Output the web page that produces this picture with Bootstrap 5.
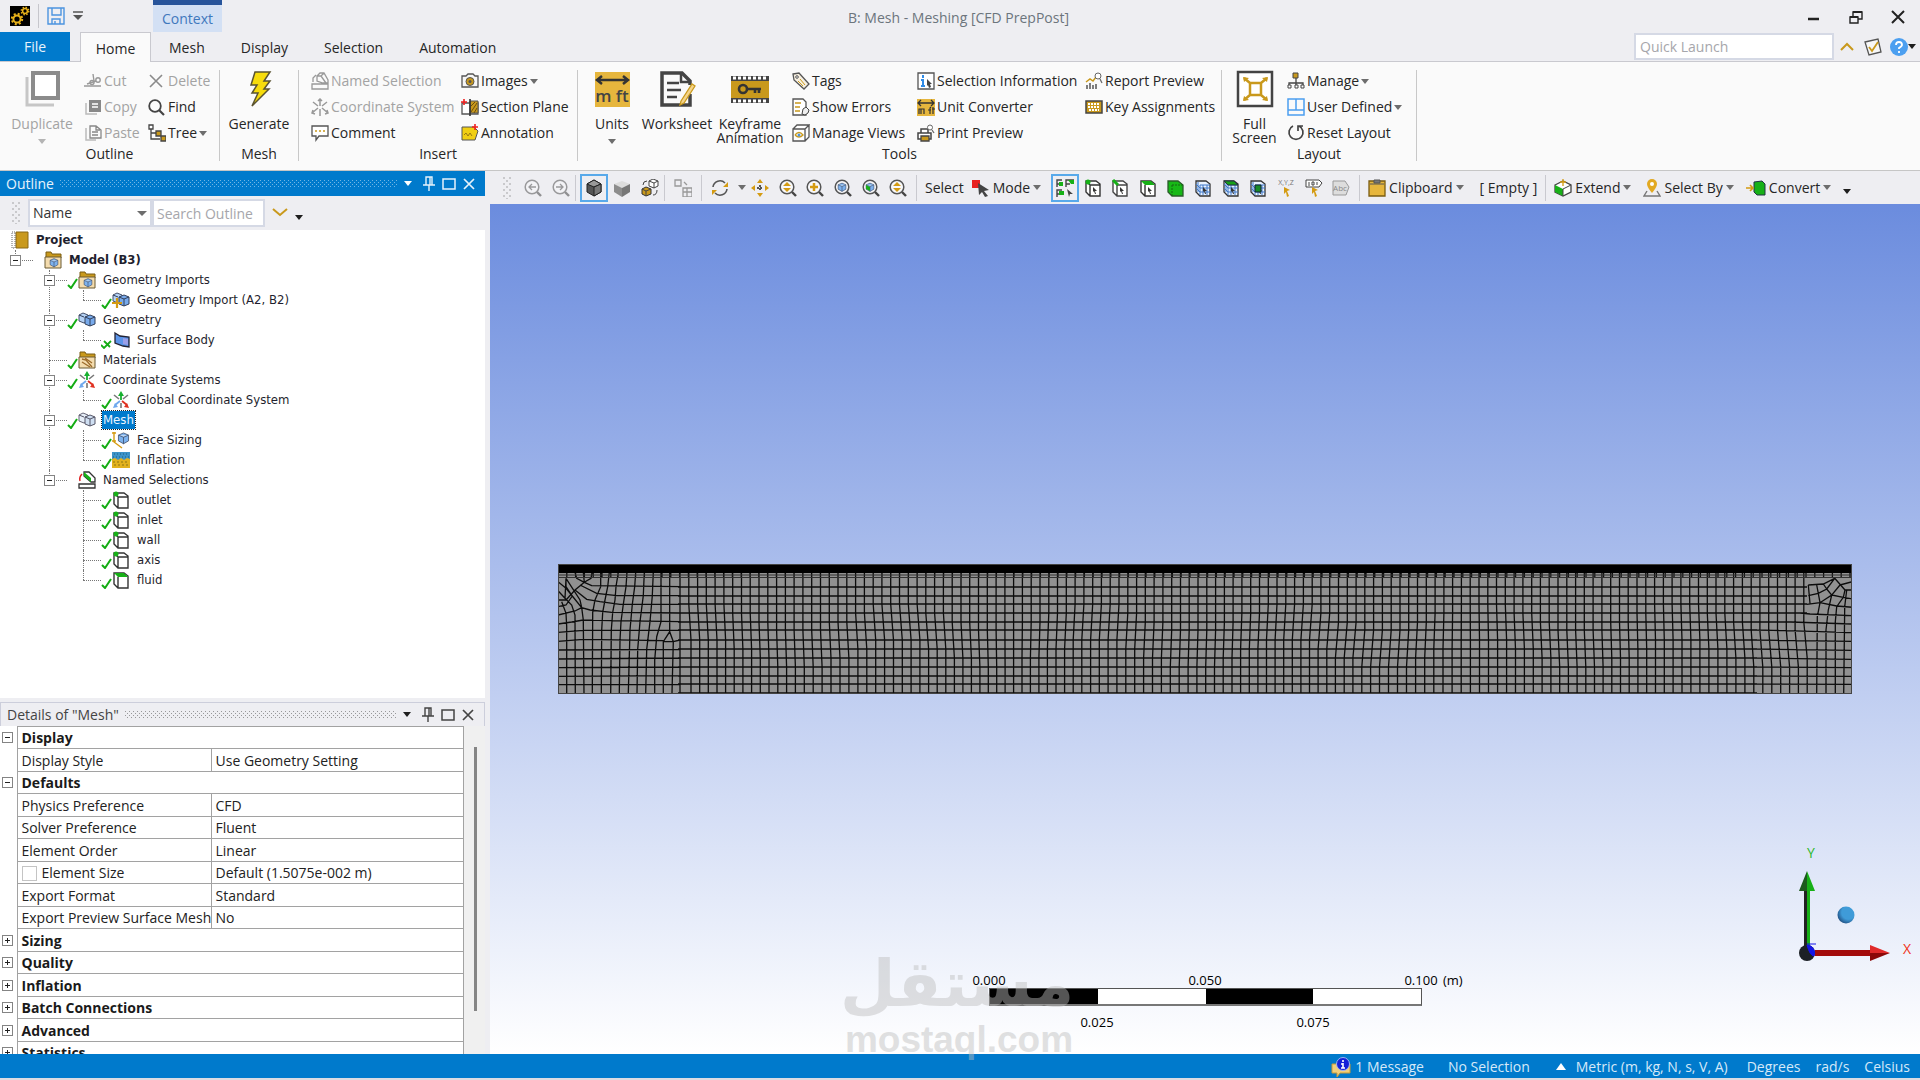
<!DOCTYPE html>
<html lang="en">
<head>
<meta charset="utf-8">
<meta name="viewport" content="width=device-width, initial-scale=1">
<title>B: Mesh - Meshing [CFD PrepPost]</title>
<link href="https://cdn.jsdelivr.net/npm/bootstrap@5.3.0/dist/css/bootstrap.min.css" rel="stylesheet">
<style>
:root{--chrome:#eeeef2;--blue:#007acc;--ink:#262626;--gold:#c9991c;--line:#cccedb}
body{background:var(--chrome);color:var(--ink);font:14px/20px "Open Sans","Noto Sans",sans-serif;overflow:hidden}
button{font:inherit;color:inherit;background:none;border:0;padding:0;white-space:nowrap}
button:disabled{color:#a3a3a3}
svg{flex:none;display:block}
.i18{width:18px;height:18px}
.caret{width:0;height:0;border:4px solid transparent;border-top:5px solid #6d6d6d;border-bottom:0;flex:none}
.caret-dark{border-top-color:#1e1e1e}
.caret-lite{border-top-color:#fff}
.titlebar{height:32px}
.titlebar .side{flex:1 1 0}
.app-title{padding-top:4px}
.logo-gap{padding-left:10px}
.vr-line{width:1px;background:#c6c6cc}
.context-tab{width:69px;height:32px;margin-left:70px;background:#d3e0f4;border-top:5px solid #27549b;color:#3f78bd;line-height:28px}
.winctl{gap:24px;padding-right:13px}
.tabrow{height:30px;border-bottom:1px solid #c9c9cf}
.tabrow a{height:29px;line-height:32px;padding:0 18px;color:var(--ink);text-decoration:none}
.tabrow .file-tab{background:var(--blue);color:#e8f3fb;width:70px;padding:0;text-align:center;line-height:30px}
.tabrow .home-tab{height:30px;margin-left:10px;width:71px;padding:0;text-align:center;background:#fafafa;border:1px solid #c9c9cf;border-bottom:0}
.launch{width:200px;height:27px;border:2px solid #d5d9e5;padding:0 4px;background:#fff}
input::placeholder{color:#a6a6ab;opacity:1}
.ribbon{background:#fafafa;height:109px;padding-top:8px;border-bottom:1px solid #c6c6c6}
.rgroup{height:91px;border-right:1px solid #c8c8c8}
.rgrid{display:grid;height:76px}
.g-outline{grid-template-columns:84px 64px 71px}
.g-mesh{grid-template-columns:78px}
.g-insert{grid-template-columns:150px 116px;padding-left:12px}
.g-tools{grid-template-columns:68px 62px 84px 125px 168px 136px}
.g-layout{grid-template-columns:65px 129px}
.rcol{display:flex;flex-direction:column;gap:4px;align-items:flex-start}
.rcol button{display:flex;align-items:center;height:22px;gap:2px}
.big{display:flex;flex-direction:column;align-items:center;line-height:14px;height:76px;text-align:center}
.big svg{width:38px;height:38px;margin-bottom:9px}
.big .caret{margin-top:8px}
.glabel{text-align:center;line-height:16px}
.side-panel{width:485px;margin-right:5px;min-height:0}
.workarea{min-height:0}
.panel-head{height:25px;padding:0 9px 0 6px;gap:6px}
.panel-head.on{background:var(--blue);color:#e6f2fb}
.panel-head.off{border:1px solid var(--line);border-bottom:0;color:#444}
.dots{height:8px;background-image:conic-gradient(at 1px 1px,transparent 75%,currentColor 0),conic-gradient(at 1px 1px,transparent 75%,currentColor 0);background-size:4px 4px;background-position:0 0,2px 2px;opacity:.5}
.grip{width:8px;height:22px;color:#777;background-image:conic-gradient(at 2px 2px,transparent 75%,currentColor 0),conic-gradient(at 2px 2px,transparent 75%,currentColor 0);background-size:6px 6px;background-position:0 0,3px 3px;opacity:.3}
.filter{height:34px;padding-left:12px}
.filter select,.filter input{height:28px;border:2px solid #d5d9e5;background:#fff;color:#333;padding:0 3px;border-radius:0}
.filter select{appearance:none;width:100%}
.filter .namebox{width:124px;margin-left:8px}
.filter .namebox .caret{position:absolute;right:5px;top:12px;pointer-events:none;border-width:5px 5px 0}
.filter input{width:113px}
.tree{font:13px/20px "DejaVu Sans Condensed","Noto Sans",sans-serif;font-stretch:condensed;color:#1f1f2e;background:#fff}
.tree ul{list-style:none;margin:0 0 0 34px;padding:0}
.tree>ul{margin-left:15px}
.tree li{position:relative}
.tree li::before{content:"";position:absolute;left:0;top:0;bottom:0;border-left:1px dotted #777}
.tree li:last-child::before{bottom:auto;height:10px}
.tree li::after{content:"";position:absolute;left:0;top:10px;width:18px;border-top:1px dotted #777}
.trow{display:flex;align-items:center;height:20px;padding-left:29px;gap:7px;white-space:nowrap}
.proj{padding-left:11px}
.tg{position:absolute;left:-5px;top:5px;z-index:1;width:11px;height:11px;border:1px solid #848484;background:#fff}
.tg::before,.plus::after{content:"";position:absolute;background:#222}
.tg::before{left:2px;top:4px;width:5px;height:1px}
.plus::after{left:4px;top:2px;width:1px;height:5px}
.tick{position:absolute;left:18px;top:8px;width:11px;height:11px;z-index:1}
.picked{background:var(--blue);color:#eaf5ff;outline:1px dotted #222;margin:0 -1px;padding:0 1px;line-height:18px}
.details{height:352px}
.dtable{width:464px;table-layout:fixed;border-collapse:collapse;background:#fff;color:#222;line-height:20px}
.dtable tr{height:22px}
.dtable tr:nth-child(even){height:23px}
.dtable td,.dtable th{padding:1px 0 0 4px;border:1px solid #a2a2a2;font-weight:400;white-space:nowrap;overflow:hidden}
.dtable th.cat{font-weight:700;color:#1a1a1a}
.dtable .gut{width:17px}
.dtable td.gut{border-width:0 1px 0 0;padding:0 0 0 2px}
.dtable .tg{position:relative;left:0;top:0;display:block}
.dtable .nm{width:194px}
.dtable input{appearance:none;width:15px;height:15px;border:1px solid #c4c4c4;margin:0 5px 0 0;vertical-align:-3px;background:#fff}
.rail{width:21px;background:#f0f0f0;padding:21px 0 0 10px}
.rail div{width:3px;height:264px;background:#858585}
.toolbar{height:33px;padding-left:13px}
.tset{display:flex;align-items:center;justify-content:space-between;height:28px}
.tset button{display:flex;align-items:center;justify-content:center;width:28px;height:28px;flex-shrink:1;min-width:0}
.t6{width:166px}
.t11{width:304px;margin-left:10px}
.tset .hot{border:2px solid #58a9ea}
.tsep{width:1px;height:26px;background:#c9c9cf}
.t-word{display:flex;align-items:center;gap:3px;height:28px}
.t-gap{margin-left:12px}
.view{background:linear-gradient(#6b8cde,#fff);padding:0 68px}
.view .mesh{width:100%;height:130px}
.triad{position:absolute;right:0;bottom:84px}
.scale{position:absolute;left:499px;bottom:24px;width:433px;font-size:13px;line-height:16px;color:#000}
.scale .bar{height:18px;border:1px solid #555;border-bottom:2px solid #777;background:#fff}
.scale .bar div{width:25%}
.scale .ticks{height:16px;margin:0 -54px}
.scale .ticks span{flex:0 0 108px;text-align:center;white-space:nowrap}
.unit{position:absolute;left:100%;margin-left:21px;top:0}
.wm{position:absolute;left:354px;bottom:-7px;width:230px;text-align:center;color:#bdbdbd;opacity:.45;font-family:"Liberation Sans",sans-serif;font-weight:700;pointer-events:none}
.wm .ar{font:700 64px/70px "DejaVu Sans",sans-serif}
.wm .en{font-size:37px;line-height:42px}
.status{height:26px;background:var(--blue);border-bottom:2px solid #dcdce2;color:#d6e9f8;padding:2px 10px 0 0}
.status .seg{margin-left:15px}
.status .metric{margin:0 4px 0 10px}
.status .up{margin-left:26px}
</style>
</head>
<body class="vh-100 d-flex flex-column">
<svg width="0" height="0" class="position-absolute" aria-hidden="true"><defs>
<symbol id="app" viewBox="0 0 20 20"><rect width="20" height="20" fill="#000"/><g fill="none" stroke="#e8b21a"><circle cx="7" cy="13" r="3.6" stroke-width="2"/><circle cx="7" cy="13" r="5.2" stroke-width="2" stroke-dasharray="2 2.1"/><circle cx="15" cy="5" r="2.4" stroke-width="1.5"/><circle cx="15" cy="5" r="3.8" stroke-width="1.4" stroke-dasharray="1.5 1.5"/></g></symbol>
<symbol id="save" viewBox="0 0 18 18"><path d="M1 1h16v16H1zM5 1v7h9V1M5 17v-5h8v5M8 14v3" fill="none" stroke="#4c94e0" stroke-width="1.4"/></symbol>
<symbol id="dup" viewBox="0 0 38 38"><rect x="10" y="3" width="25" height="25" fill="#fff" stroke="#8b8b8b" stroke-width="4"/><path d="M4 7v28h27" fill="none" stroke="#c6c6c6" stroke-width="3"/></symbol>
<symbol id="cut" viewBox="0 0 18 18"><g fill="none" stroke="#999" stroke-width="1.4"><circle cx="14" cy="8" r="2.2"/><circle cx="8" cy="10.500" r="2"/><path d="M12 9 3 12M10 9 9 2M0 14h17"/></g></symbol>
<symbol id="copy" viewBox="0 0 18 18"><path d="M5 2h12v12H5z" fill="#888"/><path d="M8 6h6M8 9h6" stroke="#fff" stroke-width="1.500"/><path d="M2 5v11h11" fill="none" stroke="#bbb" stroke-width="1.500"/></symbol>
<symbol id="paste" viewBox="0 0 18 18"><path d="M6 2h6l5 4v8H6zM12 2v4h4M8 8h6M8 11h6" fill="none" stroke="#888" stroke-width="1.300"/><path d="M2 4v12h10" fill="none" stroke="#bbb" stroke-width="1.500"/></symbol>
<symbol id="del" viewBox="0 0 18 18"><path d="m2 3 12 12M14 3 2 15" stroke="#8a8a8a" stroke-width="1.600"/></symbol>
<symbol id="find" viewBox="0 0 18 18"><circle cx="7" cy="8" r="5.800" fill="none" stroke="#444" stroke-width="1.800"/><path d="m11 12 5 5" stroke="#444" stroke-width="2.200"/></symbol>
<symbol id="treei" viewBox="0 0 18 18"><path d="M3 5v10h9M3 9h6" fill="none" stroke="#444" stroke-width="1.300"/><path d="M1 1h4v4H1z" fill="#fff" stroke="#444" stroke-width="1.300"/><path d="M8 7h5v5H8zM13 12h5v5h-5z" fill="#c9991c" stroke="#444" stroke-width="1.300"/></symbol>
<symbol id="bolt" viewBox="0 0 38 38"><path d="M15 2h15l-6 9h6l-6 8h5L12 36l6-13h-6l5-8h-6z" fill="#f7dc0b" stroke="#5a5330" stroke-width="1.500"/></symbol>
<symbol id="nsel" viewBox="0 0 18 18"><g fill="none" stroke="#999" stroke-width="1.300"><path d="M1 12h16v5H1zM6 9 6 4l3-3h4l4 7v3h-5zM6 4h4l5 7M10 4l3-3M2 10V6l3-3"/></g></symbol>
<symbol id="csysg" viewBox="0 0 18 18"><path d="M9 8V1M9 11v7M7 8 2 4M11 8l5-4M7 10l-6 5M11 10l6 5M7 3l2-2 2 2M2 12l-1 3 3 1M16 12l1 3-3 1" fill="none" stroke="#999" stroke-width="1.500"/></symbol>
<symbol id="cmt" viewBox="0 0 18 18"><path d="M1 2h16v10H8l-3 4v-4H1z" fill="#fff" stroke="#555" stroke-width="1.300"/><path d="M4 7h10" stroke="#c9991c" stroke-width="1.500" stroke-dasharray="2 2"/></symbol>
<symbol id="cam" viewBox="0 0 18 18"><path d="M1 4h4l2-2h5l2 2h3v11H1z" fill="#f6f6f6" stroke="#555" stroke-width="1.300"/><circle cx="9" cy="9.500" r="4" fill="#c9991c" stroke="#555"/><circle cx="9" cy="9.500" r="1.500" fill="#555"/></symbol>
<symbol id="sect" viewBox="0 0 18 18"><path d="M1 5h16v11H1z" fill="#fff" stroke="#555" stroke-width="1.300"/><path d="M9 3h8v12H9z" fill="#c9991c" stroke="#555"/><path d="m10 14 6-9M13 15l3-5M10 8l4-4" stroke="#6b4e0c"/><path d="M9 1v17" stroke="#333" stroke-width="1.600"/><path d="M3 1v6M0 4h6" stroke="#f02020" stroke-width="1.600"/></symbol>
<symbol id="anno" viewBox="0 0 18 18"><path d="M1 3h12l4 4-3 9H1z" fill="#f1cf12" stroke="#555"/><path d="m3 11 2-2 2 3 2-3 2 3" fill="none" stroke="#9a7a10"/><path d="M14 0v6M11 3h6" stroke="#f02020" stroke-width="1.600"/></symbol>
<symbol id="units" viewBox="0 0 38 38"><rect x="2" y="2" width="35" height="35" fill="#e6b63d"/><path d="M5 10h29M9 6l-5 4 5 4M30 6l5 4-5 4" stroke="#333" stroke-width="2.500" fill="none"/><text x="19" y="32" text-anchor="middle" font-family="Open Sans" font-size="17" font-weight="600" fill="#444">m ft</text></symbol>
<symbol id="wsheet" viewBox="0 0 38 38"><path d="M32 24v11H4V3h20l8 8v4" fill="none" stroke="#444" stroke-width="3.500"/><path d="M23 3v9h9M9 13h12M9 20h14M9 27h10" fill="none" stroke="#444" stroke-width="2.500"/><path d="m23 31 11-17 3 2-11 17-4 2z" fill="#f5d48a" stroke="#c9991c" stroke-width="1.300"/></symbol>
<symbol id="keyf" viewBox="0 0 38 38"><path d="M0 6h38v27H0z" fill="#444"/><path d="M0 11h38v17H0z" fill="#c9991c"/><path d="M2 8h35M2 31h35" stroke="#fff" stroke-width="3" stroke-dasharray="3 2"/><circle cx="12" cy="19" r="4" fill="none" stroke="#333" stroke-width="2.600"/><path d="M16 19h14M24 19v4M28 19v4" stroke="#333" stroke-width="2.600"/></symbol>
<symbol id="tag" viewBox="0 0 18 18"><path d="m1 2 6-1 10 11-5 5L2 8z" fill="#f6efe0" stroke="#555" stroke-width="1.300"/><circle cx="5" cy="5" r="1.300" fill="#fff" stroke="#555"/><path d="m8 7 5 6M6 9l5 5" stroke="#c9991c"/></symbol>
<symbol id="errs" viewBox="0 0 18 18"><path d="M1 1h10l3 3v13H1z" fill="#fff" stroke="#555" stroke-width="1.300"/><path d="M3 5h6M3 9h5M3 13h5" stroke="#c9991c" stroke-width="1.500"/><path d="m10 16 1-5 3-2 3 3-1 3-3 2z" fill="#eee" stroke="#444"/></symbol>
<symbol id="mview" viewBox="0 0 18 18"><path d="M1 5h12v12H1zM1 5l4-4h12l-4 4M17 1v12l-4 4" fill="#fff" stroke="#555" stroke-width="1.300"/><path d="M3 11q4-5 8 0-4 4-8 0" fill="#fff" stroke="#c9991c" stroke-width="1.300"/><circle cx="7" cy="11" r="1.500" fill="#4c94e0"/></symbol>
<symbol id="sinfo" viewBox="0 0 18 18"><path d="M1 1h16v16H1z" fill="#fff" stroke="#555" stroke-width="1.300"/><path d="M6 3v3M6 7v8M4 8h2M4 14h4" stroke="#2f8be6" stroke-width="2"/><path d="m10 7 5 5h-2l1 3-2 1-1-3-1 1z" fill="#444"/></symbol>
<symbol id="uconv" viewBox="0 0 18 18"><rect y="1" width="18" height="17" fill="#e6b63d"/><path d="M1 5h16M4 2 1 5l3 3M14 2l3 3-3 3" stroke="#333" stroke-width="1.300" fill="none"/><path d="M2 16v-5h2v5m0-5h3v5M13 16v-6l1-1M11 12h3M16 9v7M15 11h3" stroke="#333" stroke-width="1.200" fill="none"/></symbol>
<symbol id="print" viewBox="0 0 18 18"><path d="M4 9V5h7v4M1 9h13v6H1z" fill="#fff" stroke="#444" stroke-width="1.500"/><path d="M4 12h8v5H4z" fill="#c9991c" stroke="#444" stroke-width="1.300"/><circle cx="13" cy="3.500" r="2.500" fill="#fff" stroke="#666"/><path d="m15 6 2 3" stroke="#666" stroke-width="1.300"/></symbol>
<symbol id="report" viewBox="0 0 18 18"><path d="M2 13v4M5 11v6M8 13v4M11 12v5" stroke="#555" stroke-width="1.500"/><path d="m1 10 4-3 3 2 3-4" fill="none" stroke="#c9991c" stroke-width="1.500"/><circle cx="13" cy="4" r="3" fill="#fff" stroke="#666"/><path d="m15 7 2 4" stroke="#666" stroke-width="1.300"/></symbol>
<symbol id="keyb" viewBox="0 0 18 18"><path d="M1 3h16v12H1z" fill="#c9991c" stroke="#444" stroke-width="1.500"/><path d="M3 6h12M3 9h12M4 12h10" stroke="#fff" stroke-width="1.800" stroke-dasharray="2 1"/></symbol>
<symbol id="full" viewBox="0 0 38 38"><path d="M2 2h34v34H2z" fill="#fff" stroke="#444" stroke-width="2.500"/><path d="M14 13h11v12H14zM14 13 8 8M25 13l6-5M14 25l-6 5M25 25l6 5" fill="none" stroke="#c9991c" stroke-width="2.500"/><path d="m7 7 6 1-5 4zM32 7l-6 1 5 4zM7 31l6-1-5-4zM32 31l-6-1 5-4z" fill="#c9991c"/></symbol>
<symbol id="manage" viewBox="0 0 18 18"><path d="M9 6v5M2 14v-3h14v3M9 11v3" fill="none" stroke="#444" stroke-width="1.300"/><path d="M6 1h5v5H6z" fill="#c9991c" stroke="#444"/><path d="M1 13h3v3H1zM8 13h3v3H8zM14 13h3v3h-3z" fill="#fff" stroke="#444"/></symbol>
<symbol id="udef" viewBox="0 0 18 18"><path d="M1 1h16v16H1zM1 12h16M9 1v11" fill="none" stroke="#4c9ff0" stroke-width="1.500"/></symbol>
<symbol id="reset" viewBox="0 0 18 18"><path d="M6 2a7 7 0 1 0 6 0M11 7V2h5" fill="none" stroke="#444" stroke-width="1.700"/></symbol>
<symbol id="min" viewBox="0 0 18 18"><path d="M3 12h11" stroke="#222" stroke-width="2.500"/></symbol>
<symbol id="rest" viewBox="0 0 18 18"><path d="M3 10h8v6H3zM6 10V5h9v7h-4" fill="none" stroke="#222" stroke-width="1.400"/><path d="M3 10h8M6 5h9" stroke="#222" stroke-width="2"/></symbol>
<symbol id="cls" viewBox="0 0 18 18"><path d="m3 4 12 12M15 4 3 16" stroke="#222" stroke-width="2"/></symbol>
<symbol id="chk" viewBox="0 0 18 18"><path d="m1 4 13-3 3 13-12 3z" fill="#f7f7f7" stroke="#555" stroke-width="1.300"/><path d="m5 9 3 4 6-9" fill="none" stroke="#c9991c" stroke-width="1.800"/></symbol>
<symbol id="help" viewBox="0 0 18 18"><circle cx="9" cy="9" r="9" fill="#4c9ff0"/><path d="M6 7q0-3 3-3t3 3q0 1-3 3v1M9 13v2" fill="none" stroke="#fff" stroke-width="1.800"/></symbol>
<symbol id="pin" viewBox="0 0 14 18"><path d="M4 2h6v8H4zM8 2v8M1 10h12M7 10v6" fill="none" stroke="currentColor" stroke-width="1.400"/></symbol>
<symbol id="sq" viewBox="0 0 14 14"><path d="M1 2h12v10H1zM1 2h12" fill="none" stroke="currentColor" stroke-width="1.500"/></symbol>
<symbol id="ex" viewBox="0 0 14 14"><path d="m2 2 10 10M12 2 2 12" stroke="currentColor" stroke-width="1.700"/></symbol>
<symbol id="tick" viewBox="0 0 11 11"><path d="m1 7 3 3 6-9" fill="none" stroke="#14ac14" stroke-width="2"/></symbol>
<symbol id="tickx" viewBox="0 0 11 11"><path d="m0 7 3 3 7-7M3 3l6 6" fill="none" stroke="#14ac14" stroke-width="1.800"/></symbol>
<symbol id="book" viewBox="0 0 18 18"><path d="M5 1h12v16H5z" fill="#c9991c" stroke="#8a6914"/><path d="M1 1h3v16H1z" fill="#fff" stroke="#666" stroke-dasharray="1 1"/></symbol>
<symbol id="folder" viewBox="0 0 18 18"><path d="M2 1h5l1 2h9v4H2z" fill="#c9991c" stroke="#7a5c12"/><path d="M1 6h16v11H1z" fill="#f4dcae" stroke="#6b5a32"/></symbol>
<symbol id="box" viewBox="0 0 18 18"><path d="m2 5 7-3 7 3v8l-7 4-7-4z" fill="#7db2ee" stroke="#33405a"/><path d="m2 5 7 3 7-3M9 8v9" fill="#b9d6f7" stroke="#33405a"/></symbol>
<symbol id="fbox" viewBox="0 0 18 18"><use href="#folder"/><use href="#box" x="5" y="6" width="10" height="11"/></symbol>
<symbol id="fmat" viewBox="0 0 18 18"><use href="#folder"/><path d="m4 8 4 1 6 7M4 11l8 5M7 7l7 5" stroke="#9c6b2a" fill="none" stroke-width="1.300"/></symbol>
<symbol id="geo" viewBox="0 0 18 18"><path d="m1 4 4-2 5 2v6l-4 2-5-2z" fill="#b5d2f5" stroke="#44506a"/><path d="m7 6 5-2 5 2v7l-5 2-5-2z" fill="#78aaeb" stroke="#33405a"/><path d="m7 6 5 2 5-2M12 8v7M1 4l5 2" fill="none" stroke="#33405a"/></symbol>
<symbol id="geoadd" viewBox="0 0 18 18"><use href="#geo"/><path d="M5 7v10M0 12h10" stroke="#d49b12" stroke-width="2.200"/></symbol>
<symbol id="meshi" viewBox="0 0 18 18"><path d="m1 4 4-2 5 2v6l-4 2-5-2z" fill="#e6eef8" stroke="#667"/><path d="m7 6 5-2 5 2v7l-5 2-5-2z" fill="#cfdff2" stroke="#556"/><path d="m7 6 5 2 5-2M12 8v7M1 4l5 2" fill="none" stroke="#556"/></symbol>
<symbol id="surf" viewBox="0 0 18 18"><path d="m3 2 5 3 9 1v10l-6-1-8-3z" fill="#5b95ea" stroke="#223" stroke-width="1.300"/><path d="m11 7 5 1v6l-5-1z" fill="#9b9fe8"/></symbol>
<symbol id="csys" viewBox="0 0 18 18"><path d="M2 4l5 4M16 4l-5 4M9 12v5" stroke="#777" stroke-width="1.600"/><path d="M9 9V4" stroke="#18b030" stroke-width="1.800"/><path d="m6 5 3-5 3 5z" fill="#18b030"/><path d="m8 10-5 4" stroke="#6fa8ee" stroke-width="1.800"/><path d="m6 16-5 1 2-5z" fill="#6fa8ee"/><path d="m10 10 5 4" stroke="#e03020" stroke-width="1.800"/><path d="m12 16 5 1-2-5z" fill="#e03020"/></symbol>
<symbol id="fsize" viewBox="0 0 18 18"><use href="#box" x="5" y="0" width="13" height="14"/><path d="M2 1v10l8 6M0 2h4M0 10h4" fill="none" stroke="#d49b12" stroke-width="1.400"/></symbol>
<symbol id="infl" viewBox="0 0 18 18"><path d="M0 1h18v16H0z" fill="#e2b21f"/><path d="M0 1h18v7l-3-1-3 2-3-2-3 2-3-2-3 1z" fill="#3d93c8"/><path d="M2 3h14M1 6h16" stroke="#1d5f80" stroke-dasharray="1 2"/><path d="M1 11h16M2 14h15" stroke="#8a7414" stroke-dasharray="2 2"/></symbol>
<symbol id="nsels" viewBox="0 0 18 18"><path d="M1 13h16v4H1z" fill="#fff" stroke="#333" stroke-width="1.300"/><path d="m6 1 5 0 6 6v4h-4L6 5z" fill="#fff" stroke="#333" stroke-width="1.300"/><path d="m6 1 7 6v4L6 5z" fill="#17b017"/><path d="M4 3Q1 6 2 10" fill="none" stroke="#e02020" stroke-width="1.500"/></symbol>
<symbol id="cubev" viewBox="0 0 18 18"><path d="M2 2h10l4 3v12H6l-4-4zM2 2l4 4h10M6 6v11" fill="#fff" stroke="#333" stroke-width="1.400"/><circle cx="4" cy="3" r="2.500" fill="#17b017"/></symbol>
<symbol id="cubef" viewBox="0 0 18 18"><path d="M2 2h10l4 3v12H6l-4-4zM6 6v11" fill="#fff" stroke="#333" stroke-width="1.400"/><path d="M2 2h10l4 4H6z" fill="#17b017"/></symbol>
<symbol id="ptr" viewBox="0 0 18 18"><path d="m9 8 4 4h-2l1 3h-1l-1-3-1 1z" fill="#333"/></symbol>
<symbol id="sv" viewBox="0 0 18 18"><use href="#cubev"/><use href="#ptr"/></symbol>
<symbol id="se" viewBox="0 0 18 18"><path d="M2 2h10l4 3v12H6l-4-4zM6 6h10M6 6v11" fill="#fff" stroke="#444" stroke-width="1.400"/><path d="m2 1 5 5" stroke="#17b017" stroke-width="3"/><use href="#ptr"/></symbol>
<symbol id="sf" viewBox="0 0 18 18"><use href="#cubef"/><use href="#ptr"/></symbol>
<symbol id="sb" viewBox="0 0 18 18"><path d="M2 2h10l5 4v11H6l-4-4z" fill="#17b817" stroke="#2b5b2b" stroke-width="1.300"/><path d="M6 6h11M6 6v11" stroke="#136b13" stroke-dasharray="2 1" fill="none"/></symbol>
<symbol id="sn" viewBox="0 0 18 18"><path d="M2 2h10l4 3v12H6l-4-4z" fill="#e8f2ff" stroke="#333" stroke-width="1.300"/><path d="M6 6v10M9 6v10M13 6v10M6 6h10M6 9h10M6 13h10M4 3v10M2 5l4 4M2 9l4 4" stroke="#4079c8" stroke-width="1" fill="none"/><use href="#ptr"/></symbol>
<symbol id="snf" viewBox="0 0 18 18"><use href="#sn"/><path d="M2 2h10l4 4H6z" fill="#17a017" stroke="#234"/></symbol>
<symbol id="sne" viewBox="0 0 18 18"><use href="#sn"/><path d="M6 6h6v7H6z" fill="#178a28" stroke="#123"/></symbol>
<symbol id="xyz" viewBox="0 0 20 18"><text x="10" y="6" font-size="7" font-family="Open Sans" text-anchor="middle" fill="#777">X,Y,Z</text><path d="m8 8 6 3-3 1 2 5-2 1-1-5-2 2z" fill="#d49b12"/></symbol>
<symbol id="lab" viewBox="0 0 18 18"><path d="M1 1h13l3 3-3 4H1z" fill="#fff" stroke="#444"/><path d="M4 3v4M7 3h2v3H7zM12 3v3" stroke="#444" fill="none"/><path d="m7 8 6 3-3 1 2 5-2 1-1-5-2 2z" fill="#d49b12"/></symbol>
<symbol id="abc" viewBox="0 0 18 18"><path d="M1 2h12l4 6-3 8H1z" fill="#ddd" stroke="#999"/><text x="8" y="12" font-size="8" font-family="Open Sans" text-anchor="middle" fill="#888">Abc</text></symbol>
<symbol id="zb" viewBox="0 0 18 18"><circle cx="8" cy="8" r="6.800" fill="#fff" fill-opacity=".6" stroke="#555" stroke-width="1.500"/><path d="m13 13 4 4" stroke="#444" stroke-width="2.400"/></symbol>
<symbol id="zprev" viewBox="0 0 18 18"><g opacity=".55"><use href="#zb"/><path d="M12 8H5M8 5 5 8l3 3" fill="none" stroke="#555" stroke-width="1.300"/></g></symbol>
<symbol id="znext" viewBox="0 0 18 18"><g opacity=".55"><use href="#zb"/><path d="M4 8h7M8 5l3 3-3 3" fill="none" stroke="#555" stroke-width="1.300"/></g></symbol>
<symbol id="zud" viewBox="0 0 18 18"><use href="#zb"/><path d="m8 3 4 4H4zM8 13l4-4H4z" fill="#d49b12"/></symbol>
<symbol id="zin" viewBox="0 0 18 18"><use href="#zb"/><path d="M8 4v8M4 8h8" stroke="#d49b12" stroke-width="2.500"/></symbol>
<symbol id="zfit" viewBox="0 0 18 18"><use href="#zb"/><use href="#box" x="3" y="3" width="10" height="10"/></symbol>
<symbol id="zsel" viewBox="0 0 18 18"><use href="#zb"/><use href="#box" x="3" y="3" width="10" height="10"/><path d="m4 6 4 2v4L4 10z" fill="#17b017"/></symbol>
<symbol id="cubed" viewBox="0 0 18 18"><path d="m2 5 7-4 7 4v8l-7 4-7-4z" fill="#555" stroke="#222"/><path d="m2 5 7 3 7-3-7-4z" fill="#999" stroke="#222"/><path d="M9 8v9l7-4V5z" fill="#777" stroke="#222"/></symbol>
<symbol id="cubes" viewBox="0 0 18 18"><path d="m1 5 8-3 8 3-8 4z" fill="#ddd"/><path d="m1 5 8 4v9l-8-5z" fill="#8d8d8d"/><path d="M9 9v9l8-5V5z" fill="#777"/></symbol>
<symbol id="swap" viewBox="0 0 18 18"><path d="m8 2 4-2 5 2v5l-4 2-5-2z" fill="#fff" stroke="#444"/><path d="m1 10 4-2 5 2v5l-5 2-4-2z" fill="#c9991c" stroke="#333"/><path d="m8 2 5 2v5M13 4l4-2M1 10l4 2v5M5 12l5-2M2 6q0-4 4-4M16 11q0 5-4 5" fill="none" stroke="#444"/></symbol>
<symbol id="grid4" viewBox="0 0 18 18"><path d="M1 1h6v6H1zM9 9h9v9H9zM13 9v9M9 13h9M10 3l3 3" fill="none" stroke="#999" stroke-width="1.300"/></symbol>
<symbol id="rot" viewBox="0 0 18 18"><path d="M2 8a7 7 0 0 1 12-4M16 10A7 7 0 0 1 4 14" fill="none" stroke="#555" stroke-width="1.600"/><path d="M17 3v5h-5zM1 16v-5h5z" fill="#d49b12"/></symbol>
<symbol id="pan" viewBox="0 0 18 18"><path d="m9 0 3 4H6zM9 18l3-4H6zM0 9l4-3v6zM18 9l-4-3v6z" fill="#d49b12"/><path d="M9 6v6M6 9h6" stroke="#555" stroke-width="2" stroke-dasharray="2 1"/></symbol>
<symbol id="mode" viewBox="0 0 18 18"><path d="M0 1h8v8H0z" fill="#e82020"/><path d="m6 4 11 7-5 1 4 5-3 1-3-5-3 3z" fill="#444"/></symbol>
<symbol id="selall" viewBox="0 0 20 20"><path d="M2 9V2h5M2 6h4M11 9V2h8M2 19v-7h5M2 16h4M11 6h4" fill="none" stroke="#444" stroke-width="1.400"/><path d="M4 4h4v4H4zM13 2h6v4h-3zM4 13h5v4H4z" fill="#17b017"/><path d="m12 11 6 5-3 0-1 3z" fill="#444"/></symbol>
<symbol id="clip" viewBox="0 0 18 18"><path d="M1 2h16v15H1z" fill="#e6b63d" stroke="#7a5c12" stroke-width="1.300"/><path d="M6 1h6v3H6zM2 5h14" stroke="#555" fill="#777"/></symbol>
<symbol id="ext" viewBox="0 0 18 18"><path d="m1 6 8-4 8 4v7l-8 4-8-4z" fill="#fff" stroke="#444" stroke-width="1.300"/><path d="m1 6 8 4v7l-8-4z" fill="#17b017"/><path d="M9 10v7M9 10l8-4" stroke="#444"/><path d="M9 0v7M6 3h6" stroke="#d49b12" stroke-width="1.300"/></symbol>
<symbol id="sby" viewBox="0 0 18 18"><path d="M9 14Q4 8 4 5a5 5 0 0 1 10 0q0 3-5 9z" fill="#e2a922"/><circle cx="9" cy="5" r="2" fill="#fff"/><path d="M4 12 1 17h16l-3-5" fill="none" stroke="#777" stroke-width="1.400"/></symbol>
<symbol id="conv" viewBox="0 0 20 18"><path d="m8 3 8-1 3 3v11h-8l-3-3z" fill="#17b017" stroke="#234"/><path d="M0 9h7M4 6l3 3-3 3" fill="none" stroke="#d49b12" stroke-width="1.600"/></symbol>
<symbol id="msg" viewBox="0 0 20 20"><path d="M1 7h18v9H9l-3 4v-4H1z" fill="#f0cf7c" stroke="#c79a35"/><circle cx="12" cy="7" r="6.500" fill="#1520d8" stroke="#9fb4f0"/><path d="M12 3v2M12 6v5M10 7h2M10 11h4" stroke="#fff" stroke-width="1.600"/></symbol>
</defs></svg>

<header>
 <div class="titlebar d-flex align-items-center">
  <div class="side d-flex align-items-center logo-gap">
   <svg width="20" height="20"><use href="#app"/></svg>
   <span class="vr-line ms-2 me-2 align-self-stretch my-1"></span>
   <button aria-label="Save"><svg class="i18"><use href="#save"/></svg></button>
   <button class="ms-2" aria-label="Customize"><svg width="10" height="10" viewBox="0 0 10 10"><path d="M0 1h10" stroke="#555" stroke-width="1.500"/><path d="M0 4h10L5 9z" fill="#555"/></svg></button>
   <div class="context-tab text-center">Context</div>
  </div>
  <div class="app-title text-secondary-emphasis">B: Mesh - Meshing [CFD PrepPost]</div>
  <div class="side d-flex justify-content-end winctl">
   <button aria-label="Minimize"><svg class="i18"><use href="#min"/></svg></button>
   <button aria-label="Restore"><svg class="i18"><use href="#rest"/></svg></button>
   <button aria-label="Close"><svg class="i18"><use href="#cls"/></svg></button>
  </div>
 </div>
 <div class="tabrow d-flex">
  <nav class="d-flex">
   <a href="#" class="file-tab">File</a><a href="#" class="home-tab">Home</a><a href="#">Mesh</a><a href="#">Display</a><a href="#">Selection</a><a href="#">Automation</a>
  </nav>
  <div class="ms-auto d-flex align-items-center pe-1">
   <input class="launch" type="text" placeholder="Quick Launch" aria-label="Quick Launch">
   <button class="ms-1" aria-label="Collapse ribbon"><svg width="18" height="14" viewBox="0 0 18 14"><path d="m3 10 6-6 6 6" fill="none" stroke="#c9991c" stroke-width="2"/></svg></button>
   <button class="ms-2" aria-label="Options"><svg class="i18"><use href="#chk"/></svg></button>
   <button class="ms-2 d-flex align-items-center" aria-label="Help"><svg class="i18"><use href="#help"/></svg><span class="caret caret-dark"></span></button>
  </div>
 </div>
 <div class="ribbon d-flex">
  <section class="rgroup"><div class="rgrid g-outline">
   <button class="big" disabled><svg><use href="#dup"/></svg>Duplicate<span class="caret opacity-50"></span></button>
   <div class="rcol"><button disabled><svg class="i18"><use href="#cut"/></svg>Cut</button><button disabled><svg class="i18"><use href="#copy"/></svg>Copy</button><button disabled><svg class="i18"><use href="#paste"/></svg>Paste</button></div>
   <div class="rcol"><button disabled><svg class="i18"><use href="#del"/></svg>Delete</button><button><svg class="i18"><use href="#find"/></svg>Find</button><button><svg class="i18"><use href="#treei"/></svg>Tree<span class="caret"></span></button></div>
  </div><div class="glabel">Outline</div></section>
  <section class="rgroup"><div class="rgrid g-mesh"><button class="big"><svg><use href="#bolt"/></svg>Generate</button></div><div class="glabel">Mesh</div></section>
  <section class="rgroup"><div class="rgrid g-insert">
   <div class="rcol"><button disabled><svg class="i18"><use href="#nsel"/></svg>Named Selection</button><button disabled><svg class="i18"><use href="#csysg"/></svg>Coordinate System</button><button><svg class="i18"><use href="#cmt"/></svg>Comment</button></div>
   <div class="rcol"><button><svg class="i18"><use href="#cam"/></svg>Images<span class="caret"></span></button><button><svg class="i18"><use href="#sect"/></svg>Section Plane</button><button><svg class="i18"><use href="#anno"/></svg>Annotation</button></div>
  </div><div class="glabel">Insert</div></section>
  <section class="rgroup"><div class="rgrid g-tools">
   <button class="big"><svg><use href="#units"/></svg>Units<span class="caret"></span></button>
   <button class="big"><svg><use href="#wsheet"/></svg>Worksheet</button>
   <button class="big"><svg><use href="#keyf"/></svg>Keyframe<br>Animation</button>
   <div class="rcol"><button><svg class="i18"><use href="#tag"/></svg>Tags</button><button><svg class="i18"><use href="#errs"/></svg>Show Errors</button><button><svg class="i18"><use href="#mview"/></svg>Manage Views</button></div>
   <div class="rcol"><button><svg class="i18"><use href="#sinfo"/></svg>Selection Information</button><button><svg class="i18"><use href="#uconv"/></svg>Unit Converter</button><button><svg class="i18"><use href="#print"/></svg>Print Preview</button></div>
   <div class="rcol"><button><svg class="i18"><use href="#report"/></svg>Report Preview</button><button><svg class="i18"><use href="#keyb"/></svg>Key Assignments</button></div>
  </div><div class="glabel">Tools</div></section>
  <section class="rgroup"><div class="rgrid g-layout">
   <button class="big"><svg><use href="#full"/></svg>Full<br>Screen</button>
   <div class="rcol"><button><svg class="i18"><use href="#manage"/></svg>Manage<span class="caret"></span></button><button><svg class="i18"><use href="#udef"/></svg>User Defined<span class="caret"></span></button><button><svg class="i18"><use href="#reset"/></svg>Reset Layout</button></div>
  </div><div class="glabel">Layout</div></section>
 </div>
</header>

<div class="workarea d-flex flex-fill">
 <aside class="side-panel d-flex flex-column flex-shrink-0">
  <div class="panel-head on d-flex align-items-center"><span>Outline</span><span class="dots flex-fill"></span><span class="caret caret-lite me-1"></span><svg width="14" height="18"><use href="#pin"/></svg><svg width="14" height="14"><use href="#sq"/></svg><svg width="14" height="14"><use href="#ex"/></svg></div>
  <div class="filter d-flex align-items-center">
   <span class="grip"></span>
   <div class="namebox position-relative"><select aria-label="Filter by"><option>Name</option></select><span class="caret"></span></div>
   <input type="text" placeholder="Search Outline" aria-label="Search Outline">
   <button class="ms-1" aria-label="Expand"><svg width="22" height="14" viewBox="0 0 22 14"><path d="m4 3 7 6 7-6" fill="none" stroke="#c9991c" stroke-width="2"/></svg></button>
   <span class="caret caret-dark mt-2 ms-1"></span>
  </div>
  <div class="tree flex-fill overflow-hidden">
   <div class="trow proj"><svg class="i18"><use href="#book"/></svg><b>Project</b></div>
   <ul><li><span class="tg"></span><div class="trow"><svg class="i18"><use href="#fbox"/></svg><b>Model (B3)</b></div>
    <ul>
     <li><span class="tg"></span><svg class="tick"><use href="#tick"/></svg><div class="trow"><svg class="i18"><use href="#fbox"/></svg>Geometry Imports</div>
      <ul><li><svg class="tick"><use href="#tick"/></svg><div class="trow"><svg class="i18"><use href="#geoadd"/></svg>Geometry Import (A2, B2)</div></li></ul></li>
     <li><span class="tg"></span><svg class="tick"><use href="#tick"/></svg><div class="trow"><svg class="i18"><use href="#geo"/></svg>Geometry</div>
      <ul><li><svg class="tick"><use href="#tickx"/></svg><div class="trow"><svg class="i18"><use href="#surf"/></svg>Surface Body</div></li></ul></li>
     <li><svg class="tick"><use href="#tick"/></svg><div class="trow"><svg class="i18"><use href="#fmat"/></svg>Materials</div></li>
     <li><span class="tg"></span><svg class="tick"><use href="#tick"/></svg><div class="trow"><svg class="i18"><use href="#csys"/></svg>Coordinate Systems</div>
      <ul><li><svg class="tick"><use href="#tick"/></svg><div class="trow"><svg class="i18"><use href="#csys"/></svg>Global Coordinate System</div></li></ul></li>
     <li><span class="tg"></span><svg class="tick"><use href="#tick"/></svg><div class="trow"><svg class="i18"><use href="#meshi"/></svg><span class="picked">Mesh</span></div>
      <ul><li><svg class="tick"><use href="#tick"/></svg><div class="trow"><svg class="i18"><use href="#fsize"/></svg>Face Sizing</div></li>
      <li><svg class="tick"><use href="#tick"/></svg><div class="trow"><svg class="i18"><use href="#infl"/></svg>Inflation</div></li></ul></li>
     <li><span class="tg"></span><div class="trow"><svg class="i18"><use href="#nsels"/></svg>Named Selections</div>
      <ul><li><svg class="tick"><use href="#tick"/></svg><div class="trow"><svg class="i18"><use href="#cubev"/></svg>outlet</div></li>
      <li><svg class="tick"><use href="#tick"/></svg><div class="trow"><svg class="i18"><use href="#cubev"/></svg>inlet</div></li>
      <li><svg class="tick"><use href="#tick"/></svg><div class="trow"><svg class="i18"><use href="#cubev"/></svg>wall</div></li>
      <li><svg class="tick"><use href="#tick"/></svg><div class="trow"><svg class="i18"><use href="#cubev"/></svg>axis</div></li>
      <li><svg class="tick"><use href="#tick"/></svg><div class="trow"><svg class="i18"><use href="#cubef"/></svg>fluid</div></li></ul></li>
    </ul></li></ul>
  </div>
  <div class="details mt-1 d-flex flex-column">
   <div class="panel-head off d-flex align-items-center"><span>Details of "Mesh"</span><span class="dots flex-fill"></span><span class="caret caret-dark me-1"></span><svg width="14" height="18"><use href="#pin"/></svg><svg width="14" height="14"><use href="#sq"/></svg><svg width="14" height="14"><use href="#ex"/></svg></div>
   <div class="d-flex flex-fill overflow-hidden">
    <table class="dtable"><colgroup><col class="gut"><col class="nm"><col></colgroup><tbody>
     <tr><td class="gut"><span class="tg"></span></td><th class="cat" colspan="2">Display</th></tr>
     <tr><td class="gut"></td><th>Display Style</th><td>Use Geometry Setting</td></tr>
     <tr><td class="gut"><span class="tg"></span></td><th class="cat" colspan="2">Defaults</th></tr>
     <tr><td class="gut"></td><th>Physics Preference</th><td>CFD</td></tr>
     <tr><td class="gut"></td><th>Solver Preference</th><td>Fluent</td></tr>
     <tr><td class="gut"></td><th>Element Order</th><td>Linear</td></tr>
     <tr><td class="gut"></td><th><input type="checkbox" id="esz"><label for="esz">Element Size</label></th><td>Default (1.5075e-002 m)</td></tr>
     <tr><td class="gut"></td><th>Export Format</th><td>Standard</td></tr>
     <tr><td class="gut"></td><th>Export Preview Surface Mesh</th><td>No</td></tr>
     <tr><td class="gut"><span class="tg plus"></span></td><th class="cat" colspan="2">Sizing</th></tr>
     <tr><td class="gut"><span class="tg plus"></span></td><th class="cat" colspan="2">Quality</th></tr>
     <tr><td class="gut"><span class="tg plus"></span></td><th class="cat" colspan="2">Inflation</th></tr>
     <tr><td class="gut"><span class="tg plus"></span></td><th class="cat" colspan="2">Batch Connections</th></tr>
     <tr><td class="gut"><span class="tg plus"></span></td><th class="cat" colspan="2">Advanced</th></tr>
     <tr><td class="gut"><span class="tg plus"></span></td><th class="cat" colspan="2">Statistics</th></tr>
    </tbody></table>
    <div class="rail"><div></div></div>
   </div>
  </div>
 </aside>

 <main class="flex-fill d-flex flex-column">
  <div class="toolbar d-flex align-items-center">
   <span class="grip"></span>
   <div class="tset ms-2"><button aria-label="Previous view"><svg class="i18"><use href="#zprev"/></svg></button><button aria-label="Next view"><svg class="i18"><use href="#znext"/></svg></button></div>
   <span class="tsep me-1"></span>
   <div class="tset"><button class="hot" aria-label="Shaded with edges"><svg class="i18"><use href="#cubed"/></svg></button><button aria-label="Shaded"><svg class="i18"><use href="#cubes"/></svg></button><button aria-label="Toggle"><svg class="i18"><use href="#swap"/></svg></button></div>
   <span class="tsep"></span>
   <div class="tset mx-1"><button aria-label="Tile"><svg class="i18"><use href="#grid4"/></svg></button></div>
   <span class="tsep"></span>
   <div class="tset ms-1"><button aria-label="Rotate"><svg class="i18"><use href="#rot"/></svg></button><span class="caret ms-1"></span></div>
   <div class="tset t6 me-1"><button aria-label="Pan"><svg class="i18"><use href="#pan"/></svg></button><button aria-label="Zoom"><svg class="i18"><use href="#zud"/></svg></button><button aria-label="Box zoom"><svg class="i18"><use href="#zin"/></svg></button><button aria-label="Zoom to fit"><svg class="i18"><use href="#zfit"/></svg></button><button aria-label="Zoom to selection"><svg class="i18"><use href="#zsel"/></svg></button><button aria-label="Zoom level"><svg class="i18"><use href="#zud"/></svg></button></div>
   <span class="tsep"></span>
   <span class="ms-2">Select</span>
   <button class="t-word ms-2"><svg class="i18"><use href="#mode"/></svg>Mode<span class="caret"></span></button>
   <div class="tset t11"><button class="hot" aria-label="Smart select"><svg width="20" height="20"><use href="#selall"/></svg></button><button aria-label="Vertex"><svg class="i18"><use href="#sv"/></svg></button><button aria-label="Edge"><svg class="i18"><use href="#se"/></svg></button><button aria-label="Face"><svg class="i18"><use href="#sf"/></svg></button><button aria-label="Body"><svg class="i18"><use href="#sb"/></svg></button><button aria-label="Node"><svg class="i18"><use href="#sn"/></svg></button><button aria-label="Element face"><svg class="i18"><use href="#snf"/></svg></button><button aria-label="Element"><svg class="i18"><use href="#sne"/></svg></button><button aria-label="Hit point"><svg width="20" height="18"><use href="#xyz"/></svg></button><button aria-label="Label"><svg class="i18"><use href="#lab"/></svg></button><button aria-label="Text"><svg class="i18"><use href="#abc"/></svg></button></div>
   <span class="tsep ms-1"></span>
   <button class="t-word ms-2"><svg class="i18"><use href="#clip"/></svg>Clipboard<span class="caret"></span></button>
   <span class="ms-3">[ Empty ]</span>
   <span class="tsep ms-2"></span>
   <button class="t-word ms-2"><svg class="i18"><use href="#ext"/></svg>Extend<span class="caret"></span></button>
   <button class="t-word t-gap"><svg class="i18"><use href="#sby"/></svg>Select By<span class="caret"></span></button>
   <button class="t-word t-gap"><svg width="20" height="18"><use href="#conv"/></svg>Convert<span class="caret"></span></button>
   <span class="caret caret-dark mt-2 t-gap"></span>
  </div>
  <div class="view flex-fill position-relative d-flex align-items-center">
   <svg class="mesh" id="mesh" viewBox="0 0 1294 130" preserveAspectRatio="none" role="img" aria-label="Surface mesh"></svg>
   <div class="scale">
    <div class="ticks d-flex"><span>0.000</span><span></span><span>0.050</span><span></span><span>0.100</span></div><span class="unit">(m)</span>
    <div class="bar d-flex"><div class="bg-black"></div><div></div><div class="bg-black"></div><div></div></div>
    <div class="ticks d-flex mt-2"><span></span><span>0.025</span><span></span><span>0.075</span><span></span></div>
   </div>
   <div class="wm"><div class="ar" lang="ar" dir="rtl">مستقل</div><div class="en">mostaql.com</div></div>
   <svg class="triad" width="125" height="130" viewBox="0 0 125 130" role="img" aria-label="Axis triad">
    <defs><radialGradient id="ball" cx=".65" cy=".35" r=".8"><stop offset=".5" stop-color="#3f9bd8"/><stop offset="1" stop-color="#173a6b"/></radialGradient></defs>
    <path d="M9 48h3v58H9z" fill="#222"/><path d="M12 48h3v58h-3z" fill="#17b017"/><path d="m12 31-8 20h8z" fill="#1d5a1d"/><path d="m12 31 8 20h-8z" fill="#17b017"/>
    <path d="M20 110h56v6H20z" fill="#a30b0b"/><path d="m75 105 20 8H75z" fill="#e02a2a"/><path d="m75 121 20-8H75z" fill="#8b0808"/>
    <circle cx="12" cy="113" r="8" fill="#1c2026"/><path d="M12 105a8 8 0 0 1 7 11q-4 0-7-11M12 104h9" fill="#1414e6" stroke="#1414e6"/>
    <circle cx="51" cy="75" r="8.500" fill="url(#ball)"/>
    <text x="16" y="18" font-family="Open Sans" font-size="14" text-anchor="middle" fill="#2cb82c">Y</text>
    <text x="112" y="114" font-family="Open Sans" font-size="14" text-anchor="middle" fill="#f03018">X</text>
   </svg>
  </div>
 </main>
</div>
<footer class="status d-flex align-items-center justify-content-end">
 <svg width="20" height="20"><use href="#msg"/></svg><span class="ms-1">1 Message</span>
 <span class="ms-4">No Selection</span>
 <svg class="up" width="10" height="8" viewBox="0 0 10 8"><path d="m5 0 5 7H0z" fill="#fff"/></svg><span class="metric">Metric (m, kg, N, s, V, A)</span>
 <span class="seg">Degrees</span><span class="seg">rad/s</span><span class="seg">Celsius</span>
</footer>
<script>
(function(){
 // Structured quad rows between two hand-placed transition zones.
 var rows=[14,23,32,40,49,58,66,76,85,94,103,112,120,129], W=1294, d='';
 function line(p){d+='M'+p.map(function(q){return q[0].toFixed(1)+' '+q[1].toFixed(1)}).join('L');}
 function left(s){line(s.split(' ').map(function(t){t=t.split(',');return [t[0]/3-18,t[1]/3-14]}));}
 function right(s){line(s.split(' ').map(function(t){t=t.split(',');return [t[0]/3+942,t[1]/3-14]}));}
 var x,k,i;
 for(k=0,x=122;x<1250;k++,x=122+k*8.78){
  var s=k?2.4*Math.sin(x/150)+1.2*Math.sin(x/47):0, a=3+Math.round(1.5+1.5*Math.sin(x/31)), b=Math.min(a+4,11);
  line([[x,9],[x,rows[a]],[x+s,rows[b]],[x+s,129]]);
 }
 for(i=1;i<rows.length;i++)line([[120,rows[i]],[i<5?1249:1199,rows[i]]]);
 for(i=0;i<=6;i++)line([[i*8.8,9],[i*8.8,14]]);
 for(x=60;x<W;x+=8.8)line([[x,9],[x,14]]);
 ['420,110 155,107 133,97','420,137 230,137 170,130 120,105','420,163 240,163 180,155 140,148 105,120','420,189 215,187 150,180 125,173 97,138 78,110 78,85','420,215 215,212 130,210 95,216 54,222','420,241 130,241 54,247','370,272 130,268 54,274','420,270 400,275 370,275','420,298 54,300','420,324 54,327','420,351 54,353','420,377 54,379','420,403 54,404',
 '235,67 228,110 225,150 218,187 214,240 212,430','261,67 258,110 250,163 243,215 240,270 238,430','287,67 284,110 277,163 270,240 265,430','313,67 310,137 300,215 293,298 291,430','340,67 337,137 330,215 320,298 317,430','363,67 363,215 350,260 344,330 344,430','389,67 389,245 370,275 370,430','389,245 400,275 396,430','182,67 182,110 165,150 158,187 157,430','208,67 203,110 195,150 188,187 185,240 184,430','156,67 153,85 133,97 105,120 78,150 54,150','105,67 110,85 133,97','130,67 133,97','54,95 78,115 97,138','125,173 130,210 132,430','54,122 75,145 95,165 105,195 106,430','78,85 120,150 125,173','78,85 75,145','54,170 78,165 97,138','54,195 105,183 125,173','80,430 80,230 78,190 65,155'].forEach(left);
 ['925,105 970,102 1004,85','925,105 930,160','925,137 955,130 980,117 970,102','920,163 960,158 995,135 980,117','1004,85 980,117','1004,85 1035,120 1057,120','1020,105 1057,95','1020,105 995,135 1030,142 1057,147','1035,120 1030,142 1010,170 1006,215 1006,430','960,158 1010,168 1057,172','950,105 955,130 960,158 952,200 950,430','995,135 985,180 978,240 978,430','1057,197 930,192 900,189','1057,222 872,216 770,216','1057,248 820,241 770,240','1057,274 770,270','1057,301 770,297','1057,328 770,324','1057,353 770,351','1057,379 770,378','1057,403 770,402','1040,120 1034,170 1031,430'].forEach(right);
 document.getElementById('mesh').innerHTML='<rect width="1294" height="130" fill="#919191"/><path d="'+d+'" fill="none" stroke="#0c0c0c" stroke-width="1.300"/><path d="M0 11h1294M0 13.500h1294" stroke="#333"/><rect width="1294" height="9" fill="#000"/><rect x=".5" y=".5" width="1293" height="129" fill="none" stroke="#444"/>';
})();
</script>
<script src="https://cdn.jsdelivr.net/npm/bootstrap@5.3.0/dist/js/bootstrap.bundle.min.js"></script>
</body>
</html>
